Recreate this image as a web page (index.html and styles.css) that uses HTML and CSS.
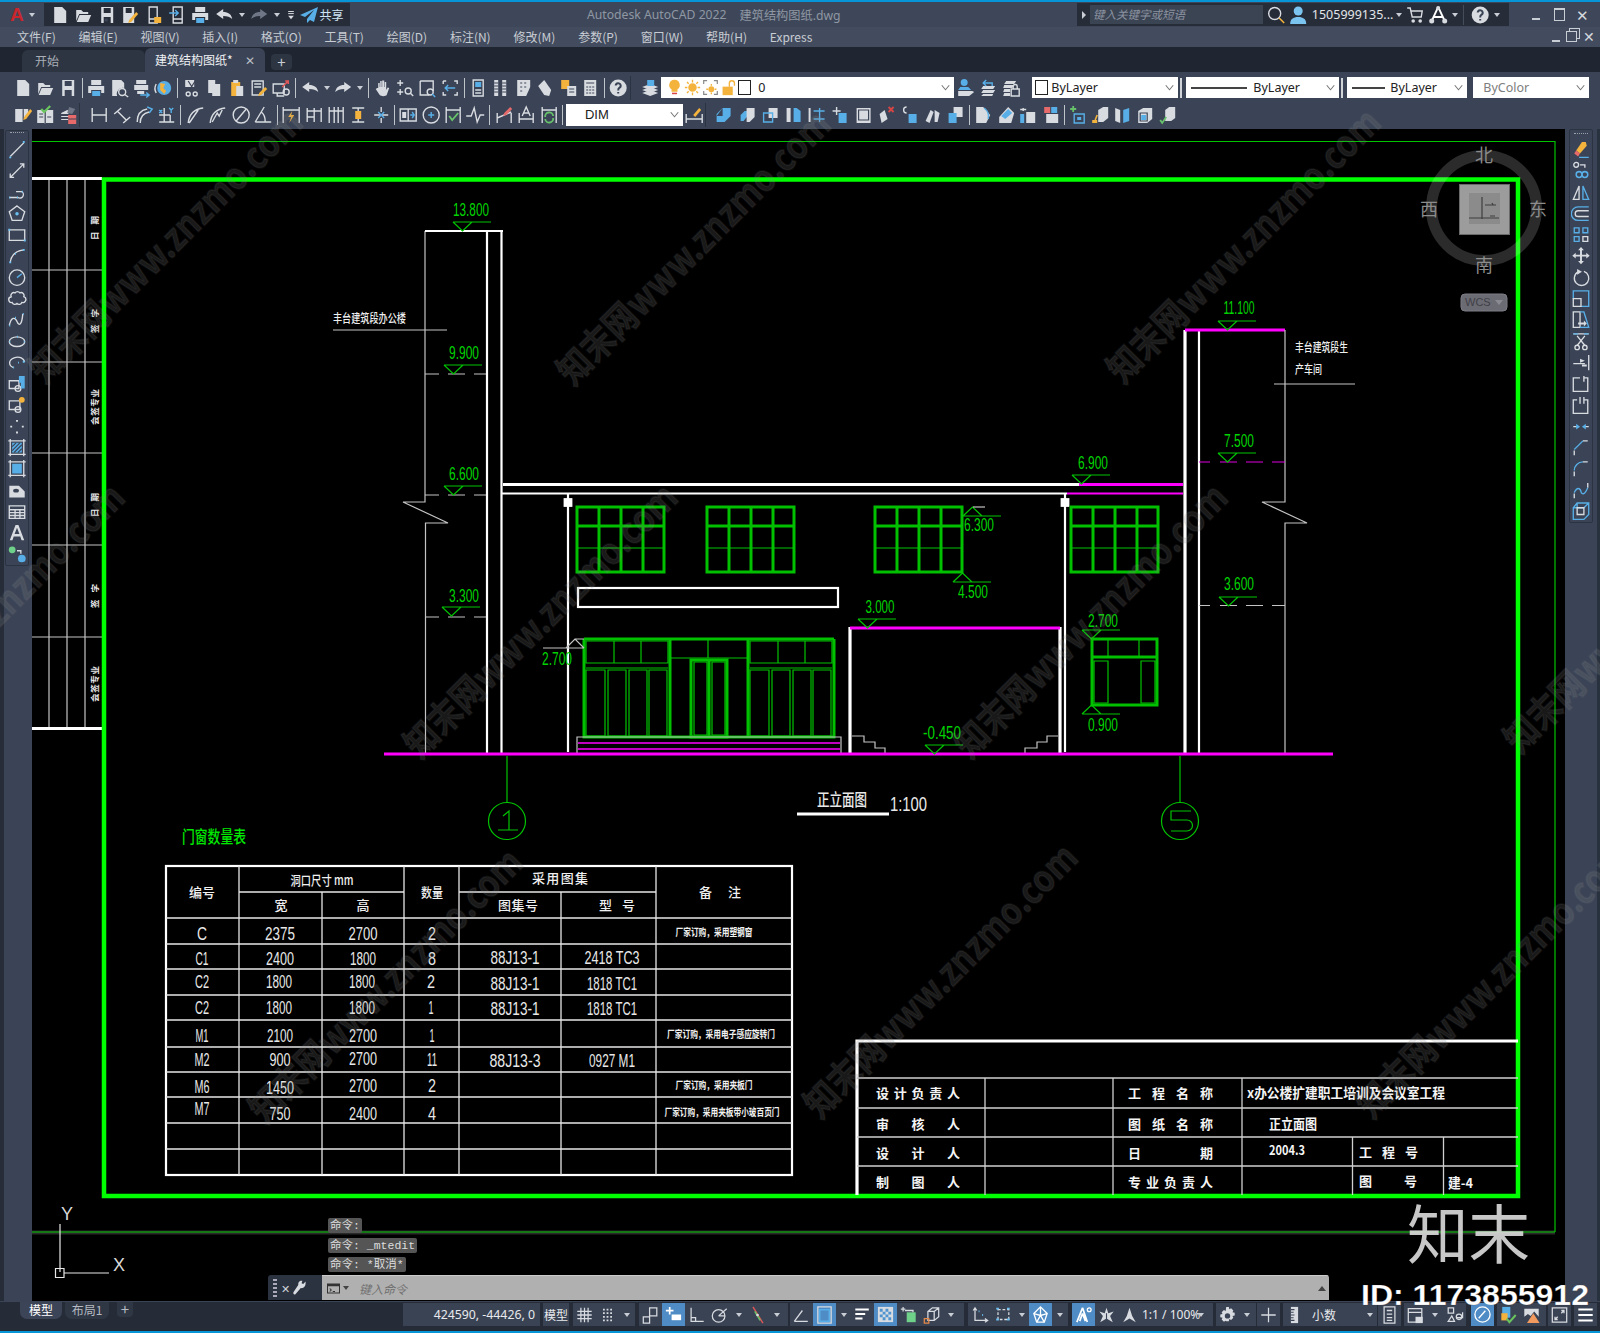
FILE: index.html
```html
<!DOCTYPE html>
<html lang="zh-CN">
<head>
<meta charset="utf-8">
<title>Autodesk AutoCAD 2022 - 建筑结构图纸.dwg</title>
<link rel="stylesheet" href="styles.css">
</head>
<body>
<svg class="defs" aria-hidden="true">
<defs>
<symbol id="doc" viewBox="0 0 20 20"><path class="f" d="M4 2h8l4 4v12H4z"/></symbol>
<symbol id="open" viewBox="0 0 20 20"><path class="f" d="M3 5h5l2 2h5v2H6L3 16zM6.500 10H18l-3 7H3.500z"/></symbol>
<symbol id="save" viewBox="0 0 20 20"><path class="f" d="M4 2h12v16H4zM6.500 3v5h7V3zM6.500 12v6h7v-6z"/><path class="dk" d="M7.500 13.500h3v3h-3z"/></symbol>
<symbol id="saveas" viewBox="0 0 20 20"><path class="f" d="M3 2h11v16H3zM5.500 3v5h6V3z"/><path class="yf" d="M9 15l7-8 2 2-7 8-3 1z"/></symbol>
<symbol id="phone" viewBox="0 0 20 20"><path d="M5 2h8v16H5zM5 14h8"/><path class="yf" d="M10 12h7v6h-7z"/></symbol>
<symbol id="phone2" viewBox="0 0 20 20"><path d="M6 2h9v16H6zM6 14h9"/><path class="bl" d="M2 8h9M8 5l3 3-3 3"/></symbol>
<symbol id="print" viewBox="0 0 20 20"><path class="f" d="M5 2h10v5H5zM2 8h16v7h-3v-3H5v3H2z"/><path class="bf" d="M6 13h8v5H6z"/></symbol>
<symbol id="undo" viewBox="0 0 20 20"><path class="f" d="M2 9l7-5v3c5 0 8 2 9 7-2-2-5-3-9-3v3z"/></symbol>
<symbol id="redo" viewBox="0 0 20 20"><path class="f" d="M18 9l-7-5v3C6 7 3 9 2 14c2-2 5-3 9-3v3z"/></symbol>
<symbol id="redod" viewBox="0 0 20 20"><path class="fd" d="M18 9l-7-5v3C6 7 3 9 2 14c2-2 5-3 9-3v3z"/></symbol>
<symbol id="menu" viewBox="0 0 20 20"><path d="M6 5h8M6 8h8"/><path class="f" d="M6 11h8l-4 5z"/></symbol>
<symbol id="plane" viewBox="0 0 20 20"><path class="bf" d="M19 2L1 10l5 2 9-7-7 9v4l3-3 4 2z"/></symbol>
<symbol id="preview" viewBox="0 0 20 20"><path class="f" d="M3 2h9l3 3v5a6 6 0 0 0-7 8H3z"/><circle cx="13" cy="14" r="3.500"/><path d="M15.500 16.500L19 19"/></symbol>
<symbol id="plot" viewBox="0 0 20 20"><path class="f" d="M5 2h10v4H5zM3 7h14v5H3zM6 13h7v3H6z"/><path class="bl" d="M9 17h8M15 14.500l3 2.500-3 2.500"/></symbol>
<symbol id="globe" viewBox="0 0 20 20"><circle class="bf" cx="11" cy="10" r="7"/><path class="yf" d="M7 5l5 1-2 4 3 3-2 3-4-4z"/><path d="M3 6a9 9 0 0 0 0 9"/></symbol>
<symbol id="cut" viewBox="0 0 20 20"><path class="f" d="M3 2h9v7H3z"/><path class="sd" d="M6 3l7 11M13 3L6 14"/><circle cx="6" cy="16" r="2"/><circle cx="13" cy="16" r="2"/></symbol>
<symbol id="copy" viewBox="0 0 20 20"><path class="f" d="M4 2h7v13H4z"/><path class="f" d="M8 6h8v12H8z"/></symbol>
<symbol id="paste" viewBox="0 0 20 20"><path class="yf" d="M4 4h9v14H4z"/><path class="f" d="M6 2h5v3H6zM9 8h7v10H9z"/></symbol>
<symbol id="match" viewBox="0 0 20 20"><path d="M3 3h11v14H3zM5 6h7M5 9h7"/><path class="yf" d="M10 15l6-6 2 2-6 6-3 1z"/></symbol>
<symbol id="block2" viewBox="0 0 20 20"><path d="M2 6h11v9H2zM6 15v3h7"/><circle cx="15" cy="14" r="3"/><path class="rs" d="M11 9l6-6M14 3h3v3"/></symbol>
<symbol id="pan" viewBox="0 0 20 20"><path class="f" d="M6 10V5h1.500v4h.5V3h1.500v6h.5V2.500H12V9h.5V4H14v8l1.500-2.500 1.500.5-2.500 7c-1 1.500-5.500 1.500-7 0l-4-6 1.500-1z"/></symbol>
<symbol id="zoomr" viewBox="0 0 20 20"><path d="M5 2v6M2 5h6M5 11v6M2 14h6"/><circle cx="13" cy="13" r="3"/><path d="M15 15l3 3"/></symbol>
<symbol id="zoomw" viewBox="0 0 20 20"><path d="M3 3h13v10M3 3v14h9"/><circle cx="13" cy="14" r="3"/><path class="bl" d="M15 16l3 3"/></symbol>
<symbol id="zoomp" viewBox="0 0 20 20"><path d="M3 3h3M14 3h3v3M3 3v3M3 14v3h3M17 14v3h-3"/><path class="bl" d="M5 10h10M8 7l-3 3 3 3"/></symbol>
<symbol id="panel" viewBox="0 0 20 20"><path d="M5 2h10v16H5z"/><path class="bf" d="M7 4h6v5H7z"/><path d="M7 12h6M7 15h6"/></symbol>
<symbol id="grid3" viewBox="0 0 20 20"><path class="f" d="M4 2h4v16H4zM12 2h4v16h-4z"/><path class="sd" d="M4 5h4M4 8h4M4 11h4M4 14h4M12 5h4M12 8h4M12 11h4M12 14h4"/></symbol>
<symbol id="sheet" viewBox="0 0 20 20"><path class="f" d="M4 2h13v7l-4 9H4z"/><path class="sd" d="M7 5h2M11 5h2M7 9h2M11 9h2M7 13h2"/></symbol>
<symbol id="tool" viewBox="0 0 20 20"><path class="f" d="M3 8l6-6 7 10-2 6-5-1z"/></symbol>
<symbol id="sheetset" viewBox="0 0 20 20"><path class="yf" d="M3 2h8v9H3z"/><path class="f" d="M9 8h9v10H9z"/><path class="sd" d="M11 11h5M11 14h5"/></symbol>
<symbol id="calc" viewBox="0 0 20 20"><path class="f" d="M4 2h12v16H4z"/><path class="sd" d="M6 5h8M6 9h2M9 9h2M12 9h2M6 12h2M9 12h2M12 12h2M6 15h2M9 15h2M12 15h2"/></symbol>
<symbol id="help" viewBox="0 0 20 20"><circle class="f" cx="10" cy="10" r="8.500"/><path class="sd2" d="M7.500 7.500a2.500 2.500 0 1 1 3.500 2.500c-1 .5-1 1-1 2.500M10 14v1.500"/></symbol>
<symbol id="layers" viewBox="0 0 20 20"><path class="f" d="M2 12l8-3 8 3-8 3zM2 9l8-3 8 3-8 3zM2 15l8-3 8 3-8 3z"/><path class="bf" d="M7 2h7v6H7z"/></symbol>
<symbol id="layers2" viewBox="0 0 20 20"><path class="bf" d="M8 1a3 3 0 0 1 0 7 3 3 0 0 1 0-7zM4 9h8l3 3H2z"/><path class="f" d="M2 13h14l2 1-5 4H2z"/></symbol>
<symbol id="layers3" viewBox="0 0 20 20"><path class="f" d="M4 8h12l-2 3H2zM4 12h12l-2 3H2zM4 16h10l-1 2H2z"/><path class="bl" d="M4 5h9v3M7 2L4 5l3 3"/></symbol>
<symbol id="layers4" viewBox="0 0 20 20"><path class="f" d="M5 3h10l-2 3H3zM3 7h10l-2 3H2zM3 11h6v3H2zM3 15h6v3H2z"/><path d="M10 11h8v7h-8zM12 11V8.500a2 2 0 0 1 4 0V11"/></symbol>
<symbol id="note1" viewBox="0 0 20 20"><path class="f" d="M2 4h7l1 1 1-1h4v4l-5 6v3H2z"/><path class="sd" d="M10 5v12"/><path class="yf" d="M11 12l6-8 2 2-6 8-3 1z"/></symbol>
<symbol id="note2" viewBox="0 0 20 20"><path class="f" d="M2 5h7l1 1 1-1h7v13h-7l-1 1-1-1H2z"/><path class="sd" d="M10 6v13M4 9h4M4 12h4M12 12h4"/><path class="gs2" d="M6 4l3 3 6-6"/></symbol>
<symbol id="note3" viewBox="0 0 20 20"><path class="f" d="M3 11h8v1H3zM3 14h8v1H3zM3 8l6-3 3 1-2 3H3z"/><path class="rf" d="M10 10h8v9h-8z"/><path class="sd" d="M10 14h8"/><path class="fd" d="M11 2l6 2-3 5-5-1z"/></symbol>
<symbol id="bulb" viewBox="0 0 20 20"><path class="yf" d="M10 1a6 6 0 0 1 3.500 11v3h-7v-3A6 6 0 0 1 10 1z"/><path class="rs2" d="M7 17h6"/></symbol>
<symbol id="sun" viewBox="0 0 20 20"><circle class="yf" cx="10" cy="10" r="5"/><path class="ys" d="M10 1v3M10 16v3M1 10h3M16 10h3M3.500 3.500l2 2M14.500 14.500l2 2M16.500 3.500l-2 2M5.500 14.500l-2 2"/></symbol>
<symbol id="freeze" viewBox="0 0 20 20"><path class="sk" d="M2 6V2h4M14 2h4v4M2 14v4h4M18 14v4h-4"/><circle class="yf" cx="11" cy="12" r="3.500"/><path class="ys" d="M11 6v2M11 16v2M5 12h2M15 12h2"/></symbol>
<symbol id="lock" viewBox="0 0 20 20"><path class="yf" d="M3 9h12v10H3z"/><path class="ys" d="M11 9V5a3 3 0 0 1 6 0v3"/></symbol>
<symbol id="dlin" viewBox="0 0 20 20"><path d="M3 3v14M17 3v14M3 10h14"/></symbol>
<symbol id="dali" viewBox="0 0 20 20"><path d="M2 9l7-6M11 18l7-6M5 6l9 9"/></symbol>
<symbol id="darc" viewBox="0 0 20 20"><path d="M3 17c0-8 4-12 10-13M6 18c0-7 4-10 9-11"/><path class="bl" d="M13 2l5 2-3 4"/></symbol>
<symbol id="dord" viewBox="0 0 20 20"><path d="M3 17h15M8 3v14M14 10v7M3 10h11"/><path class="bl" d="M3 5l3 3M6 5L3 8M13 3l2 2 2-2M15 5v3"/></symbol>
<symbol id="drad" viewBox="0 0 20 20"><path d="M2 18C3 9 8 4 17 3M3 18L12 5"/></symbol>
<symbol id="djog" viewBox="0 0 20 20"><path d="M2 18C3 9 8 4 17 3M4 17l5-9 2 3 3-6"/></symbol>
<symbol id="ddia" viewBox="0 0 20 20"><circle cx="10" cy="10" r="8"/><path d="M5 16L15 4"/></symbol>
<symbol id="dang" viewBox="0 0 20 20"><path d="M2 17h16M2 17l9-15M8 7c3 2 4 6 4 10"/></symbol>
<symbol id="dqk" viewBox="0 0 20 20"><path d="M2 2v16M18 2v16M2 5h16"/><path class="yf" d="M11 6l-4 6h3l-2 6 5-8h-3z"/></symbol>
<symbol id="dbase" viewBox="0 0 20 20"><path d="M3 3v14M10 3v14M17 3v14M3 6h14M3 12h7"/></symbol>
<symbol id="dcont" viewBox="0 0 20 20"><path d="M3 2v16M8 2v16M12 2v16M17 2v16M3 6h14"/></symbol>
<symbol id="dspace" viewBox="0 0 20 20"><path d="M4 3h12M4 17h12M10 3v14"/><path class="yf" d="M7 6h6v8H7z"/></symbol>
<symbol id="dbrk" viewBox="0 0 20 20"><path d="M10 2v5M10 13v5M3 10h14"/><path class="bl" d="M7 7l3 3-3 3M13 7l-3 3 3 3"/></symbol>
<symbol id="tol" viewBox="0 0 20 20"><path d="M2 4h16v12H2zM10 4v12"/><path class="f" d="M4 7h4v6H4z"/><path class="bl" d="M12 10h4M14 7l2 3-2 3"/></symbol>
<symbol id="cen" viewBox="0 0 20 20"><circle cx="10" cy="10" r="8"/><path class="bl" d="M10 7v6M7 10h6"/></symbol>
<symbol id="insp" viewBox="0 0 20 20"><path d="M3 2v16M17 2v16M3 5h14"/><path class="gs" d="M6 11l3 4 6-7"/></symbol>
<symbol id="jogl" viewBox="0 0 20 20"><path d="M1 11h5l3-8 3 14 3-7h4"/></symbol>
<symbol id="dedit" viewBox="0 0 20 20"><path d="M3 8v10M17 8v10M3 13l14-6"/><path class="rf" d="M10 8l6-6 2 2-6 6-3 1z"/></symbol>
<symbol id="dtext" viewBox="0 0 20 20"><path d="M3 8v10M17 8v10M3 14h14M6 11l4-9 4 9M7.500 8h5"/></symbol>
<symbol id="dupd" viewBox="0 0 20 20"><path d="M3 2v16M17 2v16M3 5h14"/><path class="gs" d="M6 12a4 4 0 0 1 8-1M14 13a4 4 0 0 1-8 1"/></symbol>
<symbol id="dstyle" viewBox="0 0 20 20"><path d="M2 9v9M18 9v9M2 14h16"/><path class="yf" d="M9 10l6-7 2 2-6 7z"/></symbol>
<symbol id="u1" viewBox="0 0 20 20"><path class="bf" d="M3 9l6-6h8v8l-6 6H3z"/><path class="dk" d="M9 3v8H3"/></symbol>
<symbol id="u2" viewBox="0 0 20 20"><path class="bf" d="M3 10l4-4h3v5l-4 5H3z"/><path class="f" d="M9 3h8v9l-5 5h-3z"/></symbol>
<symbol id="u3" viewBox="0 0 20 20"><path class="f" d="M8 3h9v10H8z"/><path class="bl" d="M3 8h9v9H3z"/></symbol>
<symbol id="u4" viewBox="0 0 20 20"><path class="f" d="M3 3h4v14H3z"/><path class="bf" d="M10 3h3l4 3v11h-7z"/></symbol>
<symbol id="u5" viewBox="0 0 20 20"><path class="f" d="M2 3h2v14H2z"/><path class="bl" d="M7 6h11M7 14h11M13 3v14"/></symbol>
<symbol id="u6" viewBox="0 0 20 20"><path d="M7 2v8M3 6h8"/><path class="bf" d="M9 8h8v10H9z"/></symbol>
<symbol id="u7" viewBox="0 0 20 20"><path class="f" d="M3 3h14v15H3z"/><path class="sd" d="M5 5h10v10H5z"/></symbol>
<symbol id="u8" viewBox="0 0 20 20"><path class="f" d="M3 9l5-4 3 9-6 4z"/><path class="rs2" d="M12 2l5 5M17 2l-5 5"/></symbol>
<symbol id="u9" viewBox="0 0 20 20"><path d="M7 2a3 3 0 1 0 0 6"/><path class="bf" d="M9 9h8v9H9z"/></symbol>
<symbol id="u10" viewBox="0 0 20 20"><path class="f" d="M3 16l5-11 3 2-4 11z"/><path class="f" d="M12 5l5 3-2 9h-3z"/></symbol>
<symbol id="u11" viewBox="0 0 20 20"><path class="f" d="M8 2h9v10H8z"/><path class="bf" d="M3 8h8v10H3z"/></symbol>
<symbol id="u13" viewBox="0 0 20 20"><path class="f" d="M3 2h7l7 8-4 8H3z"/><path class="bl" d="M11 3c4 3 5 6 4 11"/></symbol>
<symbol id="u14" viewBox="0 0 20 20"><path class="f" d="M3 12l9-10 6 6-3 10H3z"/><path class="bf" d="M5 11l7-7 4 4-7 6z"/></symbol>
<symbol id="u15" viewBox="0 0 20 20"><path d="M5 3v3M2 4.500h6"/><path class="bf" d="M2 9h4v9H2z"/><path class="f" d="M8 7h9v11H8z"/></symbol>
<symbol id="u16" viewBox="0 0 20 20"><path class="rf" d="M3 2h6v6H3z"/><path class="bf" d="M10 2h6v6h-6z"/><path class="f" d="M5 9h12v9H5z"/></symbol>
<symbol id="u17" viewBox="0 0 20 20"><path class="gs" d="M5 1v6M2 4h6"/><path class="bl" d="M6 9h10v9H6z"/><path class="bf" d="M9 12h4v3H9z"/></symbol>
<symbol id="u18" viewBox="0 0 20 20"><path class="f" d="M8 5l5-3h5v11l-5 4H8z"/><path class="yf" d="M2 15h5v3H2z"/><path class="ys" d="M5 15l2-5"/></symbol>
<symbol id="u19" viewBox="0 0 20 20"><path class="f" d="M2 3l5 2v13l-5-2z"/><path class="bf" d="M10 5l6-2v13l-6 2z"/></symbol>
<symbol id="u20" viewBox="0 0 20 20"><path class="f" d="M3 6l5-3h9v11l-5 4H3z"/><path class="sd" d="M5 8h7v8H5z"/><path class="bf" d="M6 10h5v5H6z"/></symbol>
<symbol id="u21" viewBox="0 0 20 20"><path class="f" d="M7 5l4-3h6v11l-4 3H7z"/><path class="gs" d="M2 15l2 3 4-6"/></symbol>
<symbol id="cline" viewBox="0 0 20 20"><path d="M3 17L17 3"/><path class="bs" d="M2 18h2M16 2h2"/></symbol>
<symbol id="cxline" viewBox="0 0 20 20"><path d="M3 17L17 3M13 3h4v4M3 13v4h4"/></symbol>
<symbol id="cpline" viewBox="0 0 20 20"><path d="M2 15h9a3 3 0 0 0 4-6H9"/><path class="bs" d="M2 15h1M10 15h1M15 9h1"/></symbol>
<symbol id="cpoly" viewBox="0 0 20 20"><path d="M10 2l8 6-3 9H5L2 8z"/><circle class="bs" cx="10" cy="10" r=".800"/></symbol>
<symbol id="crect" viewBox="0 0 20 20"><path d="M2 5h16v11H2z"/><path class="bs" d="M1 5h2M17 16h2"/></symbol>
<symbol id="carc" viewBox="0 0 20 20"><path d="M3 17C4 9 9 5 17 4"/><path class="bs" d="M2 17h2M8 8h1M16 4h2"/></symbol>
<symbol id="ccir" viewBox="0 0 20 20"><circle cx="10" cy="10" r="8"/><path class="bl" d="M10 10l5-4"/></symbol>
<symbol id="ccld" viewBox="0 0 20 20"><path d="M4 8a3 3 0 0 1 4-4 3 3 0 0 1 5 0 3 3 0 0 1 4 4 3 3 0 0 1-2 6 3 3 0 0 1-5 1 3 3 0 0 1-5-1 3 3 0 0 1-1-6z"/></symbol>
<symbol id="cspl" viewBox="0 0 20 20"><path d="M2 16c2-9 6-9 8-4s5 4 6-8"/><path class="bs" d="M2 16h1M8 8h1M16 4h1"/></symbol>
<symbol id="cell" viewBox="0 0 20 20"><ellipse cx="10" cy="10" rx="8" ry="5"/><path class="bs" d="M10 5h1M2 10h1M17 10h1"/></symbol>
<symbol id="cearc" viewBox="0 0 20 20"><path d="M6 15C1 13 1 7 7 5s10 1 11 4"/><path class="bs" d="M11 10h1M16 9h2M6 15h1"/></symbol>
<symbol id="cins" viewBox="0 0 20 20"><path d="M2 7h10v8H2z"/><circle cx="11" cy="15" r="3"/><path class="bf" d="M12 2h6v13h-4V9h-2z"/></symbol>
<symbol id="cblk" viewBox="0 0 20 20"><path d="M2 5h11v9H2z"/><circle cx="11" cy="14" r="3"/><circle class="yf" cx="15" cy="4" r="3"/></symbol>
<symbol id="cpt" viewBox="0 0 20 20"><path class="f" d="M9 3h2v2H9zM3 9h2v2H3zM15 9h2v2h-2zM9 15h2v2H9z"/></symbol>
<symbol id="chat" viewBox="0 0 20 20"><path d="M3 1v18M17 1v18M1 3h18M1 17h18"/><path class="bf" d="M5 5h10v10H5z"/><path class="sd" d="M5 9l4-4M5 13l8-8M7 15l8-8M11 15l4-4"/></symbol>
<symbol id="cgrad" viewBox="0 0 20 20"><path d="M3 1v18M17 1v18M1 3h18M1 17h18"/><path class="bf" d="M5 5h10v10H5z"/></symbol>
<symbol id="creg" viewBox="0 0 20 20"><path class="f" d="M2 5h10l6 6v6H2z"/><ellipse class="dk" cx="9" cy="10" rx="3" ry="2"/></symbol>
<symbol id="ctab" viewBox="0 0 20 20"><path d="M2 4h16v13H2zM2 8h16M2 11h16M2 14h16M8 8v9M13 8v9"/></symbol>
<symbol id="ctext" viewBox="0 0 20 20"><path class="f" d="M8.500 2h3l6 16h-2.800l-1.300-4H6.600l-1.300 4H2.500zM10 5L7.500 11.500h5z"/></symbol>
<symbol id="cadd" viewBox="0 0 20 20"><circle class="gf" cx="5" cy="5" r="3.500"/><path d="M10 6h4v3"/><circle class="bf" cx="15" cy="14" r="4"/></symbol>
<symbol id="merase" viewBox="0 0 20 20"><path class="yf" d="M11 2h4l1 4-7 8-4-3z"/><path class="rf" d="M5 11l4 3-2 3-4-3z"/><path class="bl" d="M8 18h10"/></symbol>
<symbol id="mcopy" viewBox="0 0 20 20"><circle cx="5" cy="4" r="2.500"/><path d="M9 4h5v3"/><circle class="bl2" cx="8" cy="14" r="3"/><circle class="bl2" cx="14" cy="14" r="3"/></symbol>
<symbol id="mmir" viewBox="0 0 20 20"><path d="M2 17l6-14v14z"/><path class="bl" d="M18 17l-6-14v14z"/></symbol>
<symbol id="moff" viewBox="0 0 20 20"><path class="bl" d="M18 3H7a7 7 0 0 0 0 14h11"/><path d="M18 7H7a3 3 0 0 0 0 6h11"/></symbol>
<symbol id="marr" viewBox="0 0 20 20"><path class="bl" d="M3 3h5v5H3zM12 3h5v5h-5zM3 12h5v5H3z"/><path d="M12 12h5v5h-5z"/></symbol>
<symbol id="mmov" viewBox="0 0 20 20"><path class="f" d="M10 1l3 3.500h-2V9h4.500V7l3.500 3-3.500 3v-2H11v4.500h2L10 19l-3-3.500h2V11H4.500v2L1 10l3.500-3v2H9V4.500H7z"/></symbol>
<symbol id="mrot" viewBox="0 0 20 20"><path d="M13 3.500A7.500 7.500 0 1 1 7 4"/><path class="f" d="M6 1l5 3-5 3z"/></symbol>
<symbol id="msca" viewBox="0 0 20 20"><path class="bl" d="M2 10V2h16v16h-8"/><path d="M2 10h8v8H2z"/></symbol>
<symbol id="mstr" viewBox="0 0 20 20"><path d="M2 2h7v16H2z"/><path class="bl" d="M9 2h4l5 16H9"/><path class="f" d="M7 13h6v-2l3 3-3 3v-2H7z"/></symbol>
<symbol id="mtrim" viewBox="0 0 20 20"><path class="sd0" d="M2 2h16"/><path class="bl" d="M2 2h5M13 2h5"/><path d="M6 4l8 10M14 4L6 14"/><circle cx="6" cy="16" r="2.300"/><circle cx="14" cy="16" r="2.300"/></symbol>
<symbol id="mext" viewBox="0 0 20 20"><path d="M18 2v16M2 11h12"/><path class="f" d="M9 6l5 2-5 2zM11 12h5v2h-5z"/></symbol>
<symbol id="mbrk1" viewBox="0 0 20 20"><path d="M9 4H2v14h15V4h-4M13 2v6"/></symbol>
<symbol id="mbrk2" viewBox="0 0 20 20"><path d="M6 4H2v14h15V4h-4M9 1v7M13 1v7"/></symbol>
<symbol id="mjoin" viewBox="0 0 20 20"><path d="M2 10h5M13 10h5"/><path class="bf" d="M5 7l4 3-4 3zM15 7l-4 3 4 3z"/></symbol>
<symbol id="mchm" viewBox="0 0 20 20"><path d="M3 18v-5M17 3h-5"/><path class="bl" d="M3 12l9-9"/></symbol>
<symbol id="mfil" viewBox="0 0 20 20"><path d="M3 18v-5M17 3h-5"/><path class="bl" d="M3 12c0-5 4-9 9-9"/></symbol>
<symbol id="mbld" viewBox="0 0 20 20"><path d="M3 18v-5M17 2v5"/><path class="bl" d="M3 12c3-6 6-5 7-1s4 3 7-4"/></symbol>
<symbol id="mexp" viewBox="0 0 20 20"><path class="bl" d="M6 1h12v12l-5 5H2V6zM6 1v5H2M18 1l-5 5H6"/><path d="M6 6h7v7H6z"/></symbol>
<symbol id="sgrid" viewBox="0 0 20 20"><path d="M6 2v16M10 2v16M14 2v16M2 6h16M2 10h16M2 14h16"/></symbol>
<symbol id="sdots" viewBox="0 0 20 20"><path class="f" d="M5 3h2v2H5zM9 3h2v2H9zM13 3h2v2h-2zM5 7h2v2H5zM9 7h2v2H9zM13 7h2v2h-2zM5 11h2v2H5zM9 11h2v2H9zM13 11h2v2h-2zM5 15h2v2H5zM9 15h2v2H9zM13 15h2v2h-2z"/></symbol>
<symbol id="ssnap" viewBox="0 0 20 20"><path d="M9 2h8v9H9zM9 2v10H2v7h7v-7"/></symbol>
<symbol id="sdyn" viewBox="0 0 20 20"><path class="fw" d="M2 6h8M6 2v8"/><path class="fw2" d="M8 10h10v6H8z"/></symbol>
<symbol id="sort" viewBox="0 0 20 20"><path d="M4 2v15h14M4 13h5v4"/></symbol>
<symbol id="spol" viewBox="0 0 20 20"><circle cx="9" cy="11" r="7"/><path d="M9 11l9-8M9 11h7"/></symbol>
<symbol id="siso" viewBox="0 0 20 20"><path class="rs" d="M5 1l11 18"/><path class="gs" d="M7 6l6 10"/><circle class="f" cx="10" cy="10" r="1.500"/></symbol>
<symbol id="sang" viewBox="0 0 20 20"><path d="M2 17h15M2 17l9-12"/></symbol>
<symbol id="sobj" viewBox="0 0 20 20"><path d="M3 2h14v17H3z"/><path class="bl2" d="M5 5h10v12H5z"/></symbol>
<symbol id="slw" viewBox="0 0 20 20"><path class="fw3" d="M2 4h15M2 9h11M2 14h8"/></symbol>
<symbol id="strans" viewBox="0 0 20 20"><path class="f" d="M2 2h16v16H2z"/><path class="sdb" d="M4 4h3v3H4zM10 4h3v3h-3zM7 7h3v3H7zM13 7h3v3h-3zM4 10h3v3H4zM10 10h3v3h-3zM7 13h3v3H7zM13 13h3v3h-3z"/></symbol>
<symbol id="ssel" viewBox="0 0 20 20"><path d="M4 1v5M1.500 3.500h5"/><path class="gf" d="M8 7h10v11H8z"/><path d="M6 5h9v2"/></symbol>
<symbol id="sgiz" viewBox="0 0 20 20"><path d="M6 6l5-4h7v10l-5 4H6zM6 6h7v10M13 6l5-4"/><path class="os" d="M2 14h5v5H2z"/></symbol>
<symbol id="sucs" viewBox="0 0 20 20"><path d="M5 3v13h13M3 5l2-3 2 3M16 14l3 2-3 2"/><path class="bs" d="M9 6h1M13 10h1"/></symbol>
<symbol id="scube" viewBox="0 0 20 20"><path d="M5 4h12v11H5z" stroke-dasharray="3 2"/><path class="bs" d="M3 3h3M15 3h3M3 15h3M15 15h3"/></symbol>
<symbol id="sgizw" viewBox="0 0 20 20"><path class="wh" d="M10 2l7 7-3 9H6L3 9z"/><path class="wh" d="M10 2v9M3 9l7 2 7-2M6 18l4-7 4 7"/></symbol>
<symbol id="san1" viewBox="0 0 20 20"><path class="fw" d="M9 3l5 15M9 3L3 18M9 9l-3 8M9 9l3 8"/><circle class="wh" cx="16" cy="5" r="2"/></symbol>
<symbol id="san2" viewBox="0 0 20 20"><path class="f" d="M10 2l2 6 6-2-4 5 3 7-7-4-7 4 3-7-4-5 6 2z"/><path class="sd" d="M10 8v8"/></symbol>
<symbol id="san3" viewBox="0 0 20 20"><path class="f" d="M10 2l3 9 4 7-7-4-7 4 4-7z"/></symbol>
<symbol id="gear" viewBox="0 0 20 20"><path class="f" d="M8.500 1h3l.5 2.500 2-1 2.500 2.500-1 2 2.500.5v3l-2.500.5 1 2-2.500 2.500-2-1-.5 2.500h-3L8 16.500l-2 1L3.500 15l1-2L2 12.500v-3L4.500 9l-1-2L6 4.500l2 1z"/><circle class="dk" cx="10" cy="11" r="3"/></symbol>
<symbol id="plus" viewBox="0 0 20 20"><path d="M10 2v16M2 10h16"/></symbol>
<symbol id="ruler" viewBox="0 0 20 20"><path class="f" d="M6 1h8v18H6z"/><path class="sd" d="M6 4h4M6 7h3M6 10h4M6 13h3M6 16h4"/></symbol>
<symbol id="sq" viewBox="0 0 20 20"><path d="M4 1h12v18H4zM7 5h6M7 9h6M7 13h6M7 16h6"/></symbol>
<symbol id="slock" viewBox="0 0 20 20"><path d="M2 3h15v15H2zM2 7h15"/><path class="f" d="M10 12h8v7h-8z"/></symbol>
<symbol id="siso2" viewBox="0 0 20 20"><path d="M3 2h6v6H3zM10 17H3l4-6zM12 13h7v-6"/><circle cx="15" cy="12" r="3"/></symbol>
<symbol id="shw" viewBox="0 0 20 20"><circle class="wh" cx="10" cy="10" r="8"/><path class="wh" d="M6 14l7-8"/></symbol>
<symbol id="sperf" viewBox="0 0 20 20"><path class="bf" d="M3 1h9v12H3z"/><path class="yf" d="M2 8h7v8H2z"/><path class="gs2" d="M8 14l3 4 7-8"/></symbol>
<symbol id="salert" viewBox="0 0 20 20"><path class="f" d="M2 3h16v9l-5-6-4 5-3-2-4 3z"/><path class="of" d="M12 8l7 11H5z"/></symbol>
<symbol id="sfull" viewBox="0 0 20 20"><path d="M2 2h16v16H2z"/><path d="M8 12l-3 3M5 12v3h3M12 8l3-3M12 5h3v3"/></symbol>
<symbol id="sham" viewBox="0 0 20 20"><path class="fw3" d="M2 4h16M2 10h16M2 16h16"/></symbol>
<symbol id="search" viewBox="0 0 20 20"><circle cx="8.500" cy="8.500" r="6"/><path class="ys" d="M13 13l5 5"/></symbol>
<symbol id="user" viewBox="0 0 20 20"><circle class="blf" cx="10" cy="6" r="4.500"/><path class="blf" d="M2 19c0-5 3-7 8-7s8 2 8 7z"/></symbol>
<symbol id="cart" viewBox="0 0 20 20"><path d="M2 3h3l2 9h9l1-6H6"/><circle class="f" cx="8" cy="16" r="1.800"/><circle class="f" cx="15" cy="16" r="1.800"/></symbol>
<symbol id="ada" viewBox="0 0 20 20"><path class="fw" d="M10 2L3 17M10 2l7 15M5 12h10"/><circle class="f" cx="3.500" cy="16" r="2.500"/><circle class="f" cx="16.500" cy="16" r="2.500"/><circle class="f" cx="10" cy="3" r="2"/></symbol>
<symbol id="chev" viewBox="0 0 20 20"><path class="chv" d="M5 7l5 6 5-6"/></symbol>
<symbol id="tray" viewBox="0 0 20 20"><path d="M2 4h16v12H2z"/><path class="f2" d="M2 4h16v3H2z"/><path d="M5 10l2 2-2 2M9 14h3"/></symbol>
<symbol id="wrench" viewBox="0 0 20 20"><path class="f" d="M17 2l-3 3-2-1 1-3c-3-1-6 2-5 5L2 15c-1 1 0 4 2 3l7-8c3 1 6-2 6-6z"/></symbol>
</defs>
</svg>

<div class="app">
  <div class="topline"></div>

  <header class="titlebar">
    <div class="logo"><span class="logo-a">A</span><span class="caret"></span></div>
    <div class="qat">
      <svg class="i"><use href="#doc"/></svg>
      <svg class="i"><use href="#open"/></svg>
      <svg class="i"><use href="#save"/></svg>
      <svg class="i"><use href="#saveas"/></svg>
      <svg class="i"><use href="#phone"/></svg>
      <svg class="i"><use href="#phone2"/></svg>
      <svg class="i"><use href="#print"/></svg>
      <svg class="i"><use href="#undo"/></svg>
      <span class="caretbox"><span class="caret"></span></span>
      <svg class="i"><use href="#redod"/></svg>
      <span class="caretbox"><span class="caret"></span></span>
      <svg class="i mn"><use href="#menu"/></svg>
      <svg class="i pl"><use href="#plane"/></svg>
      <span class="share">共享</span>
    </div>
    <div class="apptitle"><span>Autodesk AutoCAD 2022</span><span>建筑结构图纸.dwg</span></div>
    <div class="info">
      <span class="info-arrow"></span>
      <div class="search">键入关键字或短语</div>
      <svg class="i"><use href="#search"/></svg>
      <svg class="i"><use href="#user"/></svg>
      <span class="uname">1505999135...</span><span class="caretbox"><span class="caret"></span></span>
      <svg class="i"><use href="#cart"/></svg>
      <svg class="i"><use href="#ada"/></svg>
      <span class="caretbox"><span class="caret"></span></span>
      <span class="vsep"></span>
      <svg class="i"><use href="#help"/></svg>
      <span class="caretbox"><span class="caret"></span></span>
    </div>
    <div class="winbtns"><span class="wmin"></span><span class="wmax"></span><span class="wclose">✕</span></div>
  </header>

  <nav class="menubar">
    <span>文件(F)</span><span>编辑(E)</span><span>视图(V)</span><span>插入(I)</span><span>格式(O)</span><span>工具(T)</span><span>绘图(D)</span><span>标注(N)</span><span>修改(M)</span><span>参数(P)</span><span>窗口(W)</span><span>帮助(H)</span><span>Express</span>
    <div class="docbtns"><span class="wmin"></span><span class="wrest"></span><span class="wclose">✕</span></div>
  </nav>

  <div class="tabbar">
    <div class="doctab">开始</div>
    <div class="doctab active"><span>建筑结构图纸*</span><span class="tabx">✕</span></div>
    <div class="tabplus">+</div>
  </div>

  <div class="tools row1">
    <svg class="i"><use href="#doc"/></svg><svg class="i"><use href="#open"/></svg><svg class="i"><use href="#save"/></svg>
    <span class="tsep"></span>
    <svg class="i"><use href="#print"/></svg><svg class="i"><use href="#preview"/></svg><svg class="i"><use href="#plot"/></svg><svg class="i"><use href="#globe"/></svg>
    <span class="tsep"></span>
    <svg class="i"><use href="#cut"/></svg><svg class="i"><use href="#copy"/></svg><svg class="i"><use href="#paste"/></svg><svg class="i"><use href="#match"/></svg><svg class="i"><use href="#block2"/></svg>
    <span class="tsep"></span>
    <svg class="i"><use href="#undo"/></svg><span class="caretbox"><span class="caret"></span></span><svg class="i"><use href="#redo"/></svg><span class="caretbox"><span class="caret"></span></span>
    <span class="tsep"></span>
    <svg class="i"><use href="#pan"/></svg><svg class="i"><use href="#zoomr"/></svg><svg class="i"><use href="#zoomw"/></svg><svg class="i"><use href="#zoomp"/></svg>
    <span class="tsep"></span>
    <svg class="i"><use href="#panel"/></svg><svg class="i"><use href="#grid3"/></svg><svg class="i"><use href="#sheet"/></svg><svg class="i"><use href="#tool"/></svg><svg class="i"><use href="#sheetset"/></svg><svg class="i"><use href="#calc"/></svg>
    <span class="tsep"></span>
    <svg class="i"><use href="#help"/></svg>
    <span class="tgap"></span>
    <svg class="i"><use href="#layers"/></svg>
    <div class="combo layer">
      <svg class="ci"><use href="#bulb"/></svg><svg class="ci"><use href="#sun"/></svg><svg class="ci"><use href="#freeze"/></svg><svg class="ci"><use href="#lock"/></svg><span class="swatch"></span><span class="cname">0</span>
      <svg class="chevron"><use href="#chev"/></svg>
    </div>
    <svg class="i ilayer"><use href="#layers2"/></svg><svg class="i"><use href="#layers3"/></svg><svg class="i"><use href="#layers4"/></svg>
    <span class="thandle"></span>
    <div class="combo bylayer"><span class="swatch"></span><span class="cname">ByLayer</span><svg class="chevron"><use href="#chev"/></svg></div>
    <span class="thandle2"></span>
    <div class="combo linetype"><span class="stroke"></span><span class="cname">ByLayer</span><svg class="chevron"><use href="#chev"/></svg></div>
    <span class="thandle2"></span>
    <div class="combo lineweight"><span class="stroke short"></span><span class="cname">ByLayer</span><svg class="chevron"><use href="#chev"/></svg></div>
    <div class="combo bycolor"><span class="cname">ByColor</span><svg class="chevron"><use href="#chev"/></svg></div>
  </div>

  <div class="tools row2">
    <svg class="i"><use href="#note1"/></svg><svg class="i"><use href="#note2"/></svg><svg class="i"><use href="#note3"/></svg>
    <span class="tgap"></span>
    <svg class="i"><use href="#dlin"/></svg><svg class="i"><use href="#dali"/></svg><svg class="i"><use href="#darc"/></svg><svg class="i"><use href="#dord"/></svg>
    <span class="tsep s7"></span>
    <svg class="i"><use href="#drad"/></svg><svg class="i"><use href="#djog"/></svg><svg class="i"><use href="#ddia"/></svg><svg class="i"><use href="#dang"/></svg>
    <span class="tsep"></span>
    <svg class="i"><use href="#dqk"/></svg><svg class="i"><use href="#dbase"/></svg><svg class="i"><use href="#dcont"/></svg><svg class="i"><use href="#dspace"/></svg><svg class="i"><use href="#dbrk"/></svg>
    <span class="tsep s5"></span>
    <svg class="i"><use href="#tol"/></svg><svg class="i"><use href="#cen"/></svg><svg class="i"><use href="#insp"/></svg><svg class="i"><use href="#jogl"/></svg>
    <span class="tsep"></span>
    <svg class="i"><use href="#dedit"/></svg><svg class="i"><use href="#dtext"/></svg><svg class="i"><use href="#dupd"/></svg>
    <span class="tsep"></span>
    <div class="combo dim"><span class="cname">DIM</span><svg class="chevron"><use href="#chev"/></svg></div>
    <svg class="i"><use href="#dstyle"/></svg>
    <span class="tgap g7"></span>
    <svg class="i wide"><use href="#u1"/></svg><svg class="i wide"><use href="#u2"/></svg><svg class="i wide"><use href="#u3"/></svg><svg class="i wide"><use href="#u4"/></svg><svg class="i wide"><use href="#u5"/></svg><svg class="i wide"><use href="#u6"/></svg><svg class="i wide"><use href="#u7"/></svg><svg class="i wide"><use href="#u8"/></svg><svg class="i wide"><use href="#u9"/></svg><svg class="i wide"><use href="#u10"/></svg><svg class="i wide"><use href="#u11"/></svg>
    <span class="tsep s5"></span>
    <svg class="i"><use href="#u13"/></svg><svg class="i"><use href="#u14"/></svg><svg class="i"><use href="#u15"/></svg><svg class="i"><use href="#u16"/></svg>
    <span class="tsep s5"></span>
    <svg class="i"><use href="#u17"/></svg><svg class="i"><use href="#u18"/></svg><svg class="i"><use href="#u19"/></svg><svg class="i"><use href="#u20"/></svg><svg class="i"><use href="#u21"/></svg>
  </div>

  <div class="main">
    <aside class="rail left">
      <div class="vtool">
        <span class="vhandle"></span>
        <svg class="i"><use href="#cline"/></svg><svg class="i"><use href="#cxline"/></svg><svg class="i"><use href="#cpline"/></svg><svg class="i"><use href="#cpoly"/></svg><svg class="i"><use href="#crect"/></svg><svg class="i"><use href="#carc"/></svg><svg class="i"><use href="#ccir"/></svg><svg class="i"><use href="#ccld"/></svg><svg class="i"><use href="#cspl"/></svg><svg class="i"><use href="#cell"/></svg><svg class="i"><use href="#cearc"/></svg><svg class="i"><use href="#cins"/></svg><svg class="i"><use href="#cblk"/></svg><svg class="i"><use href="#cpt"/></svg><svg class="i"><use href="#chat"/></svg><svg class="i"><use href="#cgrad"/></svg><svg class="i"><use href="#creg"/></svg><svg class="i"><use href="#ctab"/></svg><svg class="i"><use href="#ctext"/></svg><svg class="i"><use href="#cadd"/></svg>
      </div>
    </aside>

    <div class="canvas">
      <svg class="drawing" viewBox="32 129 1533 1172" width="1533" height="1172">
        <defs>
          <g id="win">
            <path class="lg2" d="M1 1h87v65H1zM23 1v65M45 1v65M67 1v65M1 20h87"/>
            <path class="lg" d="M1 42h87"/>
          </g>
          <g id="lpanels">
            <path class="lg" d="M2 2h82v22H2zM30 2v22M57 2v22M2 24h82M2 29h82"/>
            <path class="lg" d="M2 31h19v66H2zM24 31h18v66H24zM45 31h18v66H45zM65 31h18v66H65z"/>
          </g>
          <path id="trd" class="lg" d="M0 0h38M0 0l9.500 9 9.500-9"/>
          <path id="tru" class="lg" d="M0 0h38M0 0l9.500-9 9.500 9"/>
        </defs>

        <!-- frames -->
        <path class="lshadow" d="M32 1232.500h1523"/>
        <path class="lg" d="M32 141.500h1523V1232M32 1232h1523"/>
        <path class="lw3" d="M32 178.500h70M32 728.500h70"/>
        <path class="lgr" d="M49 180v547M67 180v547M85 180v547M32 270h70M32 362h70M32 453h70M32 545h70M32 637h70"/>
        <path class="lbright" d="M104 1196V179.500h1414V1196z"/>
        <text class="rot" transform="translate(98 240) rotate(-90)" textLength="24">日 期</text>
        <text class="rot" transform="translate(98 333) rotate(-90)" textLength="24">签 字</text>
        <text class="rot" transform="translate(98 425) rotate(-90)" textLength="36">会签专业</text>
        <text class="rot" transform="translate(98 517) rotate(-90)" textLength="24">日 期</text>
        <text class="rot" transform="translate(98 608) rotate(-90)" textLength="24">签 字</text>
        <text class="rot" transform="translate(98 702) rotate(-90)" textLength="36">会签专业</text>

        <!-- elevation walls -->
        <path class="lgr" d="M425 231v271h-22l45 21h-22.500v230"/>
        <path class="lw2" d="M425 231h78M487 231v522M501.500 231v522"/>
        <path class="lw3" d="M503 484.500h576"/>
        <path class="lm" d="M1079 484.500h104"/>
        <path class="lw2" d="M502 493.500h565"/>
        <path class="lm mthin" d="M1067 493.500h116"/>
        <path class="lw2" d="M568 494v258M1065 494v258"/>
        <rect class="fw" x="564.500" y="499" width="7" height="7"/>
        <rect class="fw" x="1061.500" y="499" width="7" height="7"/>
        <path class="lgr" d="M333 330h114"/>
        <text class="cad" x="333" y="323" textLength="73" lengthAdjust="spacingAndGlyphs">丰台建筑段办公楼</text>
        <path class="ldash" d="M425 374h14M448 374h17M474 374h12M425 495h14M448 495h17M474 495h12M425 617h14M448 617h17M474 617h12"/>

        <!-- windows -->
        <use href="#win" x="576" y="506"/>
        <use href="#win" x="706" y="506"/>
        <use href="#win" x="874" y="506"/>
        <use href="#win" x="1070" y="506"/>

        <!-- canopy -->
        <rect class="lw2" x="578" y="588" width="260" height="19"/>

        <!-- entrance -->
        <path class="lg2" d="M584 639h250M584 639v98h250v-98M670 639v98M748 639v98"/>
        <use href="#lpanels" x="584" y="639"/>
        <use href="#lpanels" x="748" y="639"/>
        <path class="lg" d="M670 658h78M708 639v19"/>
        <path class="lg2" d="M691 660h36v77h-36zM709 660v77"/>
        <path class="lg" d="M694 662h13v73h-13zM712 662h13v73h-13z"/>
        <path class="lgr" d="M577 754v-17h264v17"/>
        <path class="lmt" d="M578 743h262M578 749h262"/>
        <path class="lgr" d="M543 648h41M566 648l9-9 9 9M575 639h9"/>

        <!-- garage -->
        <path class="lw3" d="M850 627v127M1060 627v127"/>
        <path class="lm" d="M850 628h210"/>
        <path class="lgr" d="M852 736h12v6h11v6h10v6M1025 754v-6h12v-6h10v-6h11"/>

        <!-- right side -->
        <path class="lw3" d="M1185 330v423"/>
        <path class="lw2" d="M1199 330v423"/>
        <path class="lm" d="M1185 330h100"/>
        <path class="lgr" d="M1285 330v172h-23l45 21h-22v230M1274 384h81"/>
        <path class="lmd" d="M1199 462h11M1220 462h17M1246 462h17M1272 462h13"/>
        <path class="ldash" d="M1199 605.500h11M1220 605.500h17M1246 605.500h17M1272 605.500h13"/>
        <text class="cad" x="1295" y="352" textLength="53" lengthAdjust="spacingAndGlyphs">丰台建筑段生</text>
        <text class="cad" x="1295" y="374" textLength="27" lengthAdjust="spacingAndGlyphs">产车间</text>

        <!-- small window -->
        <path class="lg2" d="M1092 639h65v66h-65zM1092 657h65"/>
        <path class="lg" d="M1108 639v18M1139 639v18M1094 661h14v42h-14zM1141 661h14v42h-14z"/>

        <!-- ground -->
        <path class="lm" d="M384 754h949"/>

        <!-- levels -->
        <use href="#trd" x="453" y="222"/><text class="dim" x="471" y="216" textLength="36" lengthAdjust="spacingAndGlyphs">13.800</text>
        <use href="#trd" x="444" y="365"/><text class="dim" x="464" y="359" textLength="30" lengthAdjust="spacingAndGlyphs">9.900</text>
        <use href="#trd" x="444" y="486"/><text class="dim" x="464" y="480" textLength="30" lengthAdjust="spacingAndGlyphs">6.600</text>
        <use href="#trd" x="442" y="607"/><text class="dim" x="464" y="602" textLength="30" lengthAdjust="spacingAndGlyphs">3.300</text>
        <use href="#trd" x="858" y="619"/><text class="dim" x="880" y="613" textLength="29" lengthAdjust="spacingAndGlyphs">3.000</text>
        <use href="#trd" x="925" y="745"/><text class="dim" x="942" y="739" textLength="38" lengthAdjust="spacingAndGlyphs">-0.450</text>
        <use href="#tru" x="963" y="516"/><text class="dim" x="979" y="531" textLength="30" lengthAdjust="spacingAndGlyphs">6.300</text>
        <use href="#tru" x="953" y="582"/><text class="dim" x="973" y="598" textLength="30" lengthAdjust="spacingAndGlyphs">4.500</text>
        <path class="lgr" d="M973 507h12"/>
        <use href="#trd" x="1072" y="475"/><text class="dim" x="1093" y="469" textLength="30" lengthAdjust="spacingAndGlyphs">6.900</text>
        <use href="#trd" x="1218" y="321"/><text class="dim" x="1239" y="314" textLength="31" lengthAdjust="spacingAndGlyphs">11.100</text>
        <use href="#trd" x="1218" y="453"/><text class="dim" x="1239" y="447" textLength="30" lengthAdjust="spacingAndGlyphs">7.500</text>
        <use href="#trd" x="1219" y="597"/><text class="dim" x="1239" y="590" textLength="30" lengthAdjust="spacingAndGlyphs">3.600</text>
        <use href="#trd" x="1082" y="630"/><text class="dim" x="1103" y="627" textLength="30" lengthAdjust="spacingAndGlyphs">2.700</text>
        <use href="#tru" x="1082" y="714"/><text class="dim" x="1103" y="731" textLength="30" lengthAdjust="spacingAndGlyphs">0.900</text>
        <text class="dim" x="557" y="665" textLength="30" lengthAdjust="spacingAndGlyphs">2.700</text>

        <!-- axes -->
        <path class="lg" d="M507 756v47M1180 756v47"/>
        <circle class="lg" cx="507" cy="821" r="18.500"/>
        <circle class="lg" cx="1180" cy="821" r="18.500"/>
        <path class="lg" d="M503 816l6-5v19M498 830h20"/>
        <path class="lg" d="M1191 811h-20v9h16a4 4 0 0 1 0 11h-16"/>

        <!-- drawing title -->
        <text class="cadt" x="842" y="806" textLength="50" lengthAdjust="spacingAndGlyphs">正立面图</text>
        <path class="lw3" d="M797 814h92"/>
        <text class="scale" x="890" y="811" textLength="37" lengthAdjust="spacingAndGlyphs">1:100</text>

        <!-- door & window schedule -->
        <text class="sched" x="182" y="843" textLength="64" lengthAdjust="spacingAndGlyphs">门窗数量表</text>
        <rect class="lw2" x="166" y="866" width="626" height="309"/>
        <path class="lgt" d="M239 866v309M404 866v309M459 866v309M656 866v309M322 892v283M561 892v283M239 892h165M459 892h197M166 918h626M166 944h626M166 969h626M166 995h626M166 1020h626M166 1047h626M166 1072h626M166 1097h626M166 1123h626M166 1149h626"/>

        <text class="cn" x="202" y="897" textLength="26">编 号</text>
        <text class="cn" x="322" y="885" textLength="63" lengthAdjust="spacingAndGlyphs">洞口尺寸 mm</text>
        <text class="cn" x="281" y="910">宽</text><text class="cn" x="363" y="910">高</text>
        <text class="cn" x="432" y="897" textLength="22" lengthAdjust="spacingAndGlyphs">数量</text>
        <text class="cn" x="560" y="883" textLength="56">采 用 图 集</text>
        <text class="cn" x="518" y="910" textLength="40">图 集 号</text>
        <text class="cn" x="617" y="910" textLength="36">型  号</text>
        <text class="cn" x="720" y="897" textLength="42">备   注</text>

        <text class="td" x="202" y="940" textLength="10" lengthAdjust="spacingAndGlyphs">C</text><text class="td" x="280" y="940" textLength="30" lengthAdjust="spacingAndGlyphs">2375</text><text class="td" x="363" y="940" textLength="29" lengthAdjust="spacingAndGlyphs">2700</text><text class="td" x="432" y="940" textLength="8" lengthAdjust="spacingAndGlyphs">2</text>
        <text class="note" x="714" y="936" textLength="77" lengthAdjust="spacingAndGlyphs">厂家订购，采用塑钢窗</text>

        <text class="td" x="202" y="965" textLength="13" lengthAdjust="spacingAndGlyphs">C1</text><text class="td" x="280" y="965" textLength="28" lengthAdjust="spacingAndGlyphs">2400</text><text class="td" x="363" y="965" textLength="26" lengthAdjust="spacingAndGlyphs">1800</text><text class="td" x="432" y="965" textLength="8" lengthAdjust="spacingAndGlyphs">8</text><text class="td" x="515" y="964" textLength="49" lengthAdjust="spacingAndGlyphs">88J13-1</text><text class="td" x="612" y="964" textLength="55" lengthAdjust="spacingAndGlyphs">2418 TC3</text>

        <text class="td" x="202" y="988" textLength="14" lengthAdjust="spacingAndGlyphs">C2</text><text class="td" x="279" y="988" textLength="26" lengthAdjust="spacingAndGlyphs">1800</text><text class="td" x="362" y="988" textLength="26" lengthAdjust="spacingAndGlyphs">1800</text><text class="td" x="431" y="988" textLength="8" lengthAdjust="spacingAndGlyphs">2</text><text class="td" x="515" y="990" textLength="49" lengthAdjust="spacingAndGlyphs">88J13-1</text><text class="td" x="612" y="990" textLength="50" lengthAdjust="spacingAndGlyphs">1818 TC1</text>

        <text class="td" x="202" y="1014" textLength="14" lengthAdjust="spacingAndGlyphs">C2</text><text class="td" x="279" y="1014" textLength="26" lengthAdjust="spacingAndGlyphs">1800</text><text class="td" x="362" y="1014" textLength="26" lengthAdjust="spacingAndGlyphs">1800</text><text class="td" x="431" y="1014" textLength="5" lengthAdjust="spacingAndGlyphs">1</text><text class="td" x="515" y="1015" textLength="49" lengthAdjust="spacingAndGlyphs">88J13-1</text><text class="td" x="612" y="1015" textLength="50" lengthAdjust="spacingAndGlyphs">1818 TC1</text>

        <text class="td" x="202" y="1042" textLength="13" lengthAdjust="spacingAndGlyphs">M1</text><text class="td" x="280" y="1042" textLength="26" lengthAdjust="spacingAndGlyphs">2100</text><text class="td" x="363" y="1042" textLength="28" lengthAdjust="spacingAndGlyphs">2700</text><text class="td" x="432" y="1042" textLength="5" lengthAdjust="spacingAndGlyphs">1</text>
        <text class="note" x="721" y="1038" textLength="108" lengthAdjust="spacingAndGlyphs">厂家订购，采用电子感应旋转门</text>

        <text class="td" x="202" y="1066" textLength="15" lengthAdjust="spacingAndGlyphs">M2</text><text class="td" x="280" y="1066" textLength="21" lengthAdjust="spacingAndGlyphs">900</text><text class="td" x="363" y="1065" textLength="28" lengthAdjust="spacingAndGlyphs">2700</text><text class="td" x="432" y="1066" textLength="10" lengthAdjust="spacingAndGlyphs">11</text><text class="td" x="515" y="1067" textLength="51" lengthAdjust="spacingAndGlyphs">88J13-3</text><text class="td" x="612" y="1067" textLength="46" lengthAdjust="spacingAndGlyphs">0927 M1</text>

        <text class="td" x="202" y="1093" textLength="15" lengthAdjust="spacingAndGlyphs">M6</text><text class="td" x="280" y="1094" textLength="28" lengthAdjust="spacingAndGlyphs">1450</text><text class="td" x="363" y="1092" textLength="28" lengthAdjust="spacingAndGlyphs">2700</text><text class="td" x="432" y="1092" textLength="8" lengthAdjust="spacingAndGlyphs">2</text>
        <text class="note" x="714" y="1089" textLength="77" lengthAdjust="spacingAndGlyphs">厂家订购，采用夹板门</text>

        <text class="td" x="202" y="1115" textLength="15" lengthAdjust="spacingAndGlyphs">M7</text><text class="td" x="280" y="1120" textLength="21" lengthAdjust="spacingAndGlyphs">750</text><text class="td" x="363" y="1120" textLength="28" lengthAdjust="spacingAndGlyphs">2400</text><text class="td" x="432" y="1120" textLength="8" lengthAdjust="spacingAndGlyphs">4</text>
        <text class="note" x="722" y="1116" textLength="115" lengthAdjust="spacingAndGlyphs">厂家订购，采用夹板带小玻百页门</text>

        <!-- title block -->
        <path class="lw3" d="M857 1195v-154h661"/>
        <path class="lw-w" d="M857 1078h661M857 1108h661M857 1137h661M857 1166h661M985 1078v117M1113 1078v117M1242 1078v117M1352.500 1137v58M1443.500 1137v58"/>
        <text class="tb" x="876" y="1098" textLength="84">设 计 负 责 人</text>
        <text class="tb" x="876" y="1129" textLength="84">审   核   人</text>
        <text class="tb" x="876" y="1158" textLength="84">设   计   人</text>
        <text class="tb" x="876" y="1187" textLength="84">制   图   人</text>
        <text class="tb" x="1128" y="1098" textLength="85">工 程 名 称</text>
        <text class="tb" x="1128" y="1129" textLength="85">图 纸 名 称</text>
        <text class="tb" x="1128" y="1158" textLength="85">日         期</text>
        <text class="tb" x="1128" y="1187" textLength="85">专 业 负 责 人</text>
        <text class="tbb" x="1247" y="1098" textLength="198" lengthAdjust="spacingAndGlyphs">x办公楼扩建职工培训及会议室工程</text>
        <text class="tbb" x="1269" y="1129" textLength="48" lengthAdjust="spacingAndGlyphs">正立面图</text>
        <text class="tbb" x="1269" y="1155" textLength="36" lengthAdjust="spacingAndGlyphs">2004.3</text>
        <text class="tb" x="1359" y="1157" textLength="59">工 程 号</text>
        <text class="tb" x="1359" y="1186" textLength="58">图     号</text>
        <text class="tbb" x="1448" y="1188" textLength="25" lengthAdjust="spacingAndGlyphs">建-4</text>

        <!-- ViewCube -->
        <circle class="vring" cx="1484" cy="208" r="52.500"/>
        <rect class="vface" x="1459.500" y="184.500" width="50" height="50"/>
        <rect class="vinner" x="1469" y="193" width="31" height="31"/>
        <path class="vmark" d="M1482 197v22M1469 218h30M1485 205h11M1492 203l1 2M1490 216h5"/>
        <text class="vdir" x="1484" y="162">北</text>
        <text class="vdir" x="1484" y="272">南</text>
        <text class="vdir" x="1429" y="216">西</text>
        <text class="vdir" x="1538" y="216">东</text>
        <rect class="vwcs" x="1461" y="294" width="46" height="17" rx="4"/>
        <text class="vwcst" x="1465" y="306">WCS</text>
        <path class="vtri" d="M1495 300h8l-4 5z"/>

        <!-- UCS -->
        <path class="ucs" d="M60 1224v48M64 1273h45M55.500 1268.500h8.500v9h-8.500z"/>
        <text class="ucst" x="67" y="1220">Y</text>
        <text class="ucst" x="119" y="1271">X</text>
      </svg>

      <div class="cmdhist">
        <span>命令:</span>
        <span>命令: _mtedit</span>
        <span>命令: *取消*</span>
      </div>
      <div class="cmdbar">
        <div class="cmdhead"><span class="cdots"></span><span class="cx">✕</span><svg class="i"><use href="#wrench"/></svg></div>
        <div class="cmdinput">
          <svg class="ti"><use href="#tray"/></svg><span class="caret dark"></span>
          <span class="prompt">键入命令</span>
          <span class="cmdup"></span>
        </div>
      </div>
    </div>

    <aside class="rail right">
      <div class="vtool">
        <span class="vhandle tall"></span>
        <svg class="i"><use href="#merase"/></svg><svg class="i"><use href="#mcopy"/></svg><svg class="i"><use href="#mmir"/></svg><svg class="i"><use href="#moff"/></svg><svg class="i"><use href="#marr"/></svg><svg class="i"><use href="#mmov"/></svg><svg class="i"><use href="#mrot"/></svg><svg class="i"><use href="#msca"/></svg><svg class="i"><use href="#mstr"/></svg><svg class="i"><use href="#mtrim"/></svg><svg class="i"><use href="#mext"/></svg><svg class="i"><use href="#mbrk1"/></svg><svg class="i"><use href="#mbrk2"/></svg><svg class="i"><use href="#mjoin"/></svg><svg class="i"><use href="#mchm"/></svg><svg class="i"><use href="#mfil"/></svg><svg class="i"><use href="#mbld"/></svg><svg class="i"><use href="#mexp"/></svg>
      </div>
    </aside>
  </div>

  <footer class="status">
    <div class="mtabs">
      <span class="mtab active">模型</span><span class="mtab">布局1</span><span class="mplus">+</span>
    </div>
    <div class="sgroup coords">424590, -44426, 0</div>
    <div class="sgroup txt">模型</div>
    <div class="sgroup g3"><svg class="i"><use href="#sgrid"/></svg><svg class="i"><use href="#sdots"/></svg><span class="k"><span class="caret"></span></span></div>
    <div class="sgroup g4"><svg class="i"><use href="#ssnap"/></svg><svg class="i on"><use href="#sdyn"/></svg><svg class="i"><use href="#sort"/></svg><svg class="i"><use href="#spol"/></svg><span class="k"><span class="caret"></span></span><svg class="i"><use href="#siso"/></svg><span class="k"><span class="caret"></span></span></div>
    <div class="sgroup g5"><svg class="i"><use href="#sang"/></svg><svg class="i on"><use href="#sobj"/></svg><span class="k"><span class="caret"></span></span><svg class="i"><use href="#slw"/></svg><svg class="i on"><use href="#strans"/></svg><svg class="i"><use href="#ssel"/></svg><svg class="i"><use href="#sgiz"/></svg><span class="k"><span class="caret"></span></span></div>
    <div class="sgroup g6"><svg class="i"><use href="#sucs"/></svg><svg class="i"><use href="#scube"/></svg><span class="k"><span class="caret"></span></span><svg class="i on"><use href="#sgizw"/></svg><span class="k"><span class="caret"></span></span></div>
    <div class="sgroup g7s"><svg class="i on"><use href="#san1"/></svg><svg class="i"><use href="#san2"/></svg><svg class="i"><use href="#san3"/></svg><span class="stext">1:1 / 100%</span><span class="k"><span class="caret"></span></span></div>
    <div class="sgroup g8"><svg class="i"><use href="#gear"/></svg><span class="k"><span class="caret"></span></span></div>
    <div class="sgroup g1"><svg class="i"><use href="#plus"/></svg></div>
    <div class="sgroup g10"><svg class="i"><use href="#ruler"/></svg><span class="stext cn2">小数</span><span class="k"><span class="caret"></span></span></div>
    <div class="sgroup g1"><svg class="i"><use href="#sq"/></svg></div>
    <div class="sgroup g12"><svg class="i"><use href="#slock"/></svg><span class="k"><span class="caret"></span></span></div>
    <div class="sgroup g1 g13"><svg class="i"><use href="#siso2"/></svg></div>
    <div class="sgroup g1"><svg class="i on"><use href="#shw"/></svg></div>
    <div class="sgroup g15"><svg class="i"><use href="#sperf"/></svg><svg class="i"><use href="#salert"/></svg></div>
    <div class="sgroup g1"><svg class="i"><use href="#sfull"/></svg></div>
    <div class="sgroup g1"><svg class="i"><use href="#sham"/></svg></div>
  </footer>
  <div class="bottomline"></div>

  <svg class="watermark" viewBox="0 0 1600 1333" width="1600" height="1333" aria-hidden="true">
    <defs><text id="wmt" class="wmtext" textLength="368" lengthAdjust="spacingAndGlyphs">知末网www.znzmo.com</text></defs>
    <use href="#wmt" transform="translate(45 385) rotate(-45)"/>
    <use href="#wmt" transform="translate(573 387) rotate(-45)"/>
    <use href="#wmt" transform="translate(1123 385) rotate(-45)"/>
    <use href="#wmt" transform="translate(-133 760) rotate(-45)"/>
    <use href="#wmt" transform="translate(420 760) rotate(-45)"/>
    <use href="#wmt" transform="translate(970 760) rotate(-45)"/>
    <use href="#wmt" transform="translate(1520 755) rotate(-45)"/>
    <use href="#wmt" transform="translate(265 1125) rotate(-45)"/>
    <use href="#wmt" transform="translate(820 1120) rotate(-45)"/>
    <use href="#wmt" transform="translate(1372 1120) rotate(-45)"/>
    <text class="wmbig" x="1407" y="1258" textLength="123" lengthAdjust="spacingAndGlyphs">知末</text>
    <text class="wmid" x="1361" y="1305" textLength="228" lengthAdjust="spacingAndGlyphs">ID: 1173855912</text>
  </svg>
</div>
</body>
</html>
```
FILE: styles.css
```css
* { box-sizing: border-box; }
html, body { margin: 0; padding: 0; }
body { width: 1600px; height: 1333px; overflow: hidden; background: #3b4456; font-family: "Noto Sans CJK SC", "Noto Sans", "Liberation Sans", sans-serif; font-size: 12px; color: #d5d8dd; }
.defs { position: absolute; width: 0; height: 0; }

.app { position: relative; width: 1600px; height: 1333px; display: flex; flex-direction: column; }
.topline { height: 2px; background: #0696d7; flex: none; }
.bottomline { height: 2px; background: #0696d7; flex: none; }

/* icon base */
svg.i { flex: none; width: 22.4px; height: 20px; fill: none; stroke: #d8dbe0; stroke-width: 1.4; overflow: visible; }
.f { fill: #d8dbe0; stroke: none; }
.f2 { fill: #333; stroke: none; }
.fd { fill: #6f7786; stroke: none; }
.dk { fill: #3b4456; stroke: none; }
.sd { stroke: #3b4456; fill: none; stroke-width: 1.2; }
.sd0 { stroke: #d8dbe0; fill: none; }
.sd2 { stroke: #3b4456; fill: none; stroke-width: 2; }
.sdb { fill: #4f93cf; stroke: none; }
.bl { stroke: #58aee6; fill: none; }
.bl2 { stroke: #58aee6; fill: none; stroke-width: 1.6; }
.bf { fill: #58aee6; stroke: none; }
.blf { fill: #7cc4f0; stroke: none; }
.bs { stroke: #6bc0f2; fill: none; stroke-width: 2; }
.yf { fill: #f3b33d; stroke: none; }
.ys { stroke: #f3b33d; fill: none; stroke-width: 1.6; }
.rf { fill: #e66a6a; stroke: none; }
.rs { stroke: #e05555; fill: none; stroke-width: 1.6; }
.rs2 { stroke: #d94545; fill: none; stroke-width: 1.8; }
.gs { stroke: #67c26b; fill: none; stroke-width: 1.8; }
.gs2 { stroke: #6ac45e; fill: none; stroke-width: 2.2; }
.gf { fill: #6fd08a; stroke: none; }
.os { stroke: #e38a4a; fill: none; }
.of { fill: #f09a60; stroke: none; }
.sk { stroke: #888; fill: none; stroke-width: 1.4; }
.wh { stroke: #fff; fill: none; stroke-width: 1.4; }
.fw { stroke: #fff; fill: none; stroke-width: 1.8; }
.fw2 { fill: #fff; stroke: none; }
.fw3 { stroke: #fff; fill: none; stroke-width: 2.2; }
.chv { stroke: #777; fill: none; stroke-width: 1.4; }

.caret { display: block; width: 0; height: 0; border-left: 3.5px solid transparent; border-right: 3.5px solid transparent; border-top: 4px solid #c9cdd4; }
.caret.dark { border-top-color: #444; }
.caretbox { flex: none; width: 11px; display: flex; align-items: center; justify-content: center; }
.k { flex: none; width: 15px; display: flex; align-items: center; justify-content: center; }

/* title bar */
.titlebar { flex: none; height: 25px; display: flex; align-items: center; background: #3e4759; }
.logo { flex: none; width: 44px; display: flex; align-items: center; padding-left: 10px; gap: 5px; }
.logo-a { font: bold 19px/1 "Liberation Sans", sans-serif; color: #c8262c; }
.qat { flex: none; width: 306px; height: 23px; background: #262c38; display: flex; align-items: center; padding-left: 5px; gap: 1px; }
.qat svg.i.mn { width: 14px; }
.qat svg.i.pl { width: 20px; }
.share { flex: none; color: #cfe4f5; font-size: 12px; white-space: nowrap; }
.apptitle { margin-left: 237px; display: flex; gap: 13px; color: #8f97a3; font-family: "Noto Sans", "Noto Sans CJK SC", sans-serif; font-size: 12.200px; white-space: nowrap; }
.info { margin-left: auto; flex: none; width: 432px; height: 23px; background: #262c38; display: flex; align-items: center; }
.info-arrow { width: 0; height: 0; margin: 0 4px 0 5px; border-top: 4px solid transparent; border-bottom: 4px solid transparent; border-left: 4px solid #c9cdd4; }
.search { flex: none; width: 173px; height: 19px; background: #3b4453; color: #8b92a0; font-style: italic; font-size: 11.500px; padding-left: 3px; line-height: 19px; margin-right: 2px; }
.uname { color: #e3e5e9; font: 12.500px "Noto Sans", sans-serif; margin-left: 2px; white-space: nowrap; }
.vsep { width: 1px; height: 20px; background: #454c5a; margin: 0 5px 0 3px; }
.winbtns { flex: none; width: 91px; display: flex; align-items: center; padding-left: 23px; color: #d5d8dd; font-size: 15px; }
.winbtns .wmax { margin-left: 14px; }
.winbtns .wclose { margin-left: 11px; }
.wmin { display: block; flex: none; width: 8px; height: 2px; background: #c9cdd4; margin-top: 9px; }
.wmax { display: block; flex: none; width: 11px; height: 13px; border: 1.500px solid #c9cdd4; border-top-width: 2px; }
.wrest { display: block; flex: none; width: 11px; height: 11px; border: 1.500px solid #c9cdd4; box-shadow: 3px -3px 0 -1px #434c5f, 3px -3px 0 0 #c9cdd4; }
.wclose { line-height: 1; }

/* menu */
.menubar { flex: none; height: 20px; display: flex; align-items: center; gap: 22.800px; background: #434c5f; padding: 0 0 2px 17px; color: #c8ccd3; font-size: 12px; white-space: nowrap; }
.docbtns { margin-left: auto; display: flex; align-items: center; gap: 6px; padding-right: 5px; color: #d5d8dd; font-size: 14px; }

/* doc tabs */
.tabbar { flex: none; height: 25px; background: #1f2631; display: flex; align-items: flex-end; padding-left: 22px; }
.doctab { width: 123px; height: 22px; background: #2d3542; border-radius: 6px 6px 0 0; padding-left: 13px; line-height: 22px; color: #a9aeb7; }
.doctab.active { width: 120px; height: 24px; background: #3b4456; color: #eef0f3; display: flex; justify-content: space-between; padding: 0 10px; line-height: 24px; }
.tabx { color: #b9bdc5; font-size: 12px; }
.tabplus { width: 21px; height: 16px; margin: 0 0 2px 6px; background: #2d3542; border-radius: 4px; text-align: center; line-height: 15px; color: #c9cdd4; font-size: 15px; }

/* tool rows */
.tools { flex: none; display: flex; align-items: center; background: #3b4456; padding-left: 12px; }
.row1 { height: 28px; padding-top: 3px; }
.row2 { height: 29px; }
.tsep { flex: none; width: 6px; height: 20px; position: relative; }
.tsep::after { content: ""; position: absolute; left: 2.500px; top: 0; bottom: 0; width: 1px; background: #bfc3ca; }
.tsep.s7 { width: 7px; }
.tsep.s5 { width: 5px; }
.tsep.s5::after { left: 2px; }
.tgap { flex: none; width: 9px; height: 24px; border-left: 1px solid #2c3340; margin: 0; }
.tgap.g7 { width: 7px; }
.thandle { flex: none; width: 10px; }
.thandle2 { flex: none; width: 6px; height: 20px; border-left: 2px solid #d0d3d8; margin-left: 2px; }
.row1 svg.i.ilayer { margin-left: 1px; }
svg.i.wide { width: 23.200px; }
.combo { flex: none; height: 21px; background: #fff; color: #222; display: flex; align-items: center; position: relative; font-family: "Noto Sans", sans-serif; font-size: 12.500px; }
.ci { width: 17px; height: 17px; fill: none; stroke: #555; flex: none; margin-right: 1px; }
.chevron { position: absolute; right: 1px; top: 3px; width: 15px; height: 15px; fill: none; }
.swatch { flex: none; width: 13px; height: 15px; border: 1.500px solid #222; background: #fff; margin: 0 3px; }
.combo.layer { width: 293px; padding-left: 5px; }
.combo.layer .swatch { margin: 0 7px 0 0; }
.combo.bylayer { width: 146px; }
.combo.linetype { width: 153px; padding-left: 5px; }
.combo.lineweight { width: 120px; padding-left: 5px; }
.combo.bycolor { width: 116px; margin-left: 6px; padding-left: 10px; color: #7d7d7d; }
.stroke { flex: none; width: 56px; height: 2px; background: #444; margin-right: 6px; }
.stroke.short { width: 33px; margin-right: 5px; }
.combo.dim { width: 117px; height: 22px; padding-left: 19px; font-size: 13px; }

/* main */
.main { flex: none; height: 1172px; display: flex; }
.rail { flex: none; background: #3b4456; }
.rail.left { width: 32px; border-left: 4px solid #262d39; padding-top: 1px; }
.rail.right { width: 35px; padding: 0 3px 0 4px; border-right: 3px solid #28323f; }
.vtool { width: 24px; display: flex; flex-direction: column; align-items: center; background: #3b4456; border: 1px solid #2b3240; border-radius: 2px; }
.rail.left .vtool { margin-left: 1px; }
.vtool svg.i { width: 22px; height: 21.300px; padding: 1px; }
.vhandle { flex: none; width: 14px; height: 7px; margin-top: 1px; border-top: 1px dotted #9aa0aa; }
.vhandle.tall { height: 6px; margin-top: 3px; }

.canvas { flex: none; width: 1533px; position: relative; background: #000; overflow: hidden; }
.drawing { display: block; font-family: "Noto Sans CJK SC", sans-serif; }

.lg { stroke: #00c400; stroke-width: 1.200; fill: none; }
.lg2 { stroke: #00c000; stroke-width: 3; fill: none; }
.lgr { stroke: #c4c4c4; stroke-width: 1.200; fill: none; }
.lgt { stroke: #e6e6e6; stroke-width: 1.300; fill: none; }
.lw-w { stroke: #d0d0d0; stroke-width: 1.300; fill: none; }
.lw2 { stroke: #fff; stroke-width: 2.200; fill: none; }
.lw3 { stroke: #fff; stroke-width: 3.200; fill: none; }
.lm { stroke: #ff00ff; stroke-width: 3; fill: none; }
.mthin { stroke-width: 2.200; }
.lmt { stroke: #c000c0; stroke-width: 1.800; fill: none; }
.lmd { stroke: #e000e0; stroke-width: 1.200; fill: none; }
.ldash { stroke: #c4c4c4; stroke-width: 1.200; fill: none; }
.lbright { stroke: #00ff00; stroke-width: 4.500; fill: none; }
.lshadow { stroke: #777; stroke-width: 4; opacity: .35; fill: none; }
.fw { fill: #fff; }

.dim { fill: #00d400; font: 18px "Liberation Sans", sans-serif; text-anchor: middle; }
.scale { fill: #e8e8e8; font: 20px "Liberation Sans", sans-serif; }
.td { fill: #e8e8e8; font: 18px "Liberation Sans", sans-serif; text-anchor: middle; }
.cn { fill: #f0f0f0; font-size: 13px; text-anchor: middle; font-weight: 500; }
.note { fill: #f0f0f0; font-size: 10.500px; text-anchor: middle; font-weight: 700; }
.cad { fill: #efefef; font-size: 12px; font-weight: 500; }
.cadt { fill: #e8e8e8; font-size: 17px; text-anchor: middle; font-weight: 500; }
.sched { fill: #00e800; font-size: 17px; font-weight: 500; }
.rot { fill: #e8e8e8; font-size: 8.500px; font-weight: 700; }
.tb { fill: #f4f4f4; font-size: 13px; font-weight: 700; white-space: pre; }
.tbb { fill: #f4f4f4; font-size: 13.500px; font-weight: 700; }

.vring { fill: none; stroke: #fff; stroke-width: 11; opacity: .17; }
.vface { fill: #9c9c9c; stroke: #6a6a6a; stroke-width: 1; }
.vinner { fill: #8b8b8b; stroke: none; }
.vmark { stroke: #3e3e3e; stroke-width: 1.200; fill: none; }
.vdir { fill: #8c8c8c; font-size: 18px; text-anchor: middle; }
.vwcs { fill: #6b6b74; stroke: #7d7d86; }
.vwcst { fill: #3f3f46; font: 11px "Liberation Sans", sans-serif; }
.vtri { fill: #8a8a92; }
.ucs { stroke: #e8e8e8; stroke-width: 1.200; fill: none; }
.ucst { fill: #d8d8d8; font: 18px "Liberation Sans", sans-serif; text-anchor: middle; }

/* command line */
.cmdhist { position: absolute; left: 296px; top: 1089px; display: flex; flex-direction: column; align-items: flex-start; gap: 4.500px; }
.cmdhist span { display: block; height: 15px; padding: 0 2px; background: #555; border-radius: 2px; color: #ddd; font: 11.500px/15px "Liberation Mono", "Noto Sans CJK SC", monospace; white-space: nowrap; }
.cmdbar { position: absolute; left: 236px; top: 1146px; width: 1061px; height: 25px; display: flex; border-radius: 3px 3px 0 0; overflow: hidden; }
.cmdhead { flex: none; width: 54px; background: #2b3240; display: flex; align-items: center; padding-left: 5px; }
.cdots { width: 4px; height: 18px; border-left: 2px dotted #aab; border-right: 2px dotted #aab; flex: none; }
.cx { color: #cfd2d8; font-size: 11px; margin: 0 1px 0 4px; }
.cmdhead svg.i { width: 18px; height: 16px; }
.cmdinput { flex: 1; background: #b0b0b0; display: flex; align-items: center; padding-left: 4px; gap: 2px; border-top: 1px solid #ccc; position: relative; }
.ti { width: 15px; height: 15px; fill: none; stroke: #333; stroke-width: 1.400; }
.prompt { color: #707070; font-style: italic; font-size: 12px; margin-left: 8px; }
.cmdup { position: absolute; right: 3px; top: 10px; width: 0; height: 0; border-left: 4px solid transparent; border-right: 4px solid transparent; border-bottom: 5px solid #444; }

/* status bar */
.status { flex: none; height: 30px; background: #252c38; display: flex; align-items: flex-start; border-top: 1px solid #3b4456; }
.mtabs { flex: none; width: 403px; display: flex; align-items: flex-start; padding-left: 20px; gap: 3px; }
.mtab { height: 17px; width: 44px; background: #2f3745; border-radius: 0 0 7px 7px; text-align: center; line-height: 16px; color: #b5b9c1; font-size: 12px; }
.mtab.active { background: #3c4557; color: #fff; width: 42px; }
.mplus { width: 16px; height: 15px; margin-left: 5px; text-align: center; line-height: 13px; color: #b5b9c1; font-size: 15px; background: #2f3745; border-radius: 0 0 4px 4px; }
.sgroup { flex: none; height: 23px; margin-top: 1px; margin-right: 3px; background: #3a4354; display: flex; align-items: center; color: #e8eaed; }
.sgroup svg.i { width: 23px; height: 20px; padding: 1px; }
.sgroup svg.i.on { background: #4f8bc4; height: 23px; padding: 2px 1px; }
.coords { width: 137px; justify-content: flex-end; padding-right: 5px; margin-right: 3px; font: 12.300px "Noto Sans", sans-serif; white-space: nowrap; }
.txt { width: 26px; justify-content: center; margin-right: 4px; font-size: 12px; }
.g3 { width: 62px; margin-right: 4px; }
.g4 { width: 149px; margin-right: 2px; }
.g5 { width: 174px; margin-right: 4px; }
.g6 { width: 100px; margin-right: 4px; }
.g7s { width: 141px; }
.g8 { width: 40px; margin-right: 1px; }
.g1 { width: 23px; justify-content: center; }
.g10 { width: 94px; margin-right: 1px; }
.g12 { width: 39px; margin-right: 0; }
.g13 { margin-right: 5px; }
.g15 { width: 49px; margin-right: 2px; }
.stext { flex: none; width: 51px; margin-left: 1px; font: 12px "Noto Sans", sans-serif; white-space: nowrap; text-align: center; }
.stext.cn2 { width: 56px; margin-left: 0; padding-left: 6px; text-align: left; font-family: "Noto Sans CJK SC", sans-serif; }

/* watermark overlay */
.watermark { position: absolute; left: 0; top: 0; pointer-events: none; }
.wmtext { fill: #8a8a8a; fill-opacity: .2; stroke: #8a8a8a; stroke-opacity: .1; stroke-width: 2; font-size: 37px; font-weight: 700; font-family: "Noto Sans CJK SC", sans-serif; }
.wmbig { fill: #d8d8d8; fill-opacity: .92; font-size: 64px; font-weight: 400; font-family: "Noto Sans CJK SC", sans-serif; }
.wmid { fill: #fff; stroke: #222; stroke-opacity: .35; stroke-width: .6; font: 700 30px "Liberation Sans", sans-serif; }
```
